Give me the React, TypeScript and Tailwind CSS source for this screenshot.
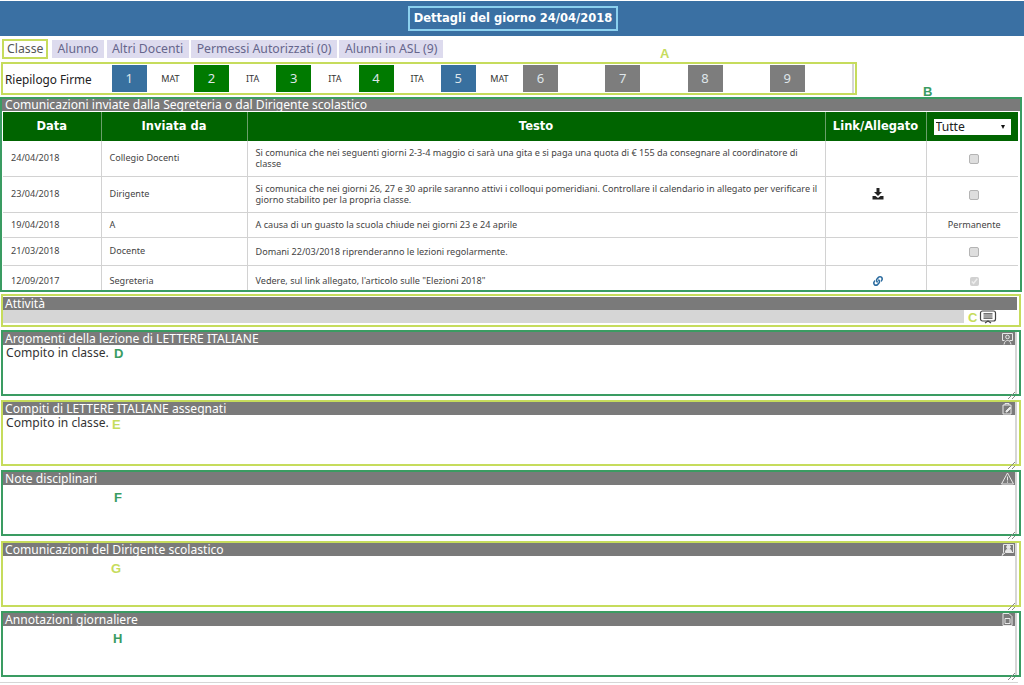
import { FaLink } from "react-icons/fa";
import { ReactNode } from "react";

const BODY = "font-['Noto_Sans','DejaVu_Sans',sans-serif]";
const HEAD = "font-['DejaVu_Sans',sans-serif]";
const LIME = "border-[#c6dc5c]";
const GREEN = "border-[#3a9c62]";

const periods = [
  { n: 1, s: "MAT", c: "bg-[#38709f]" },
  { n: 2, s: "ITA", c: "bg-[#007a00]" },
  { n: 3, s: "ITA", c: "bg-[#007a00]" },
  { n: 4, s: "ITA", c: "bg-[#007a00]" },
  { n: 5, s: "MAT", c: "bg-[#38709f]" },
  { n: 6, s: "", c: "bg-[#7d7d7d]" },
  { n: 7, s: "", c: "bg-[#7d7d7d]" },
  { n: 8, s: "", c: "bg-[#7d7d7d]" },
  { n: 9, s: "", c: "bg-[#7d7d7d]" },
];

const box = "align-middle w-[10px] h-[10px] appearance-none rounded-[2px] border border-[#b4b4b4] bg-[#dedede]";

const rows: { d: string; f: string; t: string; h: string; link?: ReactNode; last: ReactNode }[] = [
  {
    d: "24/04/2018",
    f: "Collegio Docenti",
    t: "Si comunica che nei seguenti giorni 2-3-4 maggio ci sarà una gita e si paga una quota di € 155 da consegnare al coordinatore di classe",
    h: "h-[35px]",
    last: <input type="checkbox" disabled className={box} />,
  },
  {
    d: "23/04/2018",
    f: "Dirigente",
    t: "Si comunica che nei giorni 26, 27 e 30 aprile saranno attivi i colloqui pomeridiani. Controllare il calendario in allegato per verificare il giorno stabilito per la propria classe.",
    h: "h-[36px]",
    link: (
      <svg width="12" height="12" viewBox="0 0 12 12" className="mx-auto block" fill="#222">
        <path d="M4.500 0h3v4H10L6 8 2 4h2.500z" />
        <path d="M0.500 8h3l2.500 2 2.500-2h3v3.500h-11z" />
      </svg>
    ),
    last: <input type="checkbox" disabled className={box} />,
  },
  {
    d: "19/04/2018",
    f: "A",
    t: "A causa di un guasto la scuola chiude nei giorni 23 e 24 aprile",
    h: "h-[25px]",
    last: <span>Permanente</span>,
  },
  {
    d: "21/03/2018",
    f: "Docente",
    t: "Domani 22/03/2018 riprenderanno le lezioni regolarmente.",
    h: "h-[28px]",
    last: <input type="checkbox" disabled className={box} />,
  },
  {
    d: "12/09/2017",
    f: "Segreteria",
    t: "Vedere, sul link allegato, l'articolo sulle \"Elezioni 2018\"",
    h: "h-[31px]",
    link: <FaLink className="mx-auto block text-[#2a6a9e] text-[10px]" />,
    last: <input type="checkbox" disabled defaultChecked className="align-middle w-[9px] h-[9px]" />,
  },
];

function Mark({ c, className }: { c: string; className: string }) {
  return (
    <span className={`absolute font-['Liberation_Sans',sans-serif] font-bold text-[13px] leading-none ${className}`}>{c}</span>
  );
}

function Grip() {
  return (
    <svg width="9" height="9" viewBox="0 0 9 9" className="absolute right-[3px] bottom-[-6px] z-10" stroke="#8a8a8a" fill="none">
      <path d="M1 8 8 1M5 8 8 5" />
    </svg>
  );
}

const iconProps = { width: 13, height: 13, viewBox: "0 0 13 13", fill: "none", stroke: "#e8e8e8", strokeWidth: 1 };

const IconTalk = (
  <svg {...iconProps}>
    <path d="M1.500 1.500h10v7h-3M1.500 1.500v7h2" />
    <circle cx="6.500" cy="5" r="1.800" />
    <path d="M3 12.500c.5-3 2-4 3.500-4s3 1 3.500 4" />
  </svg>
);
const IconClip = (
  <svg {...iconProps}>
    <path d="M2 3h8v9H2zM4 3V1.500h4V3" />
    <path d="M5 9l4-4 1 1-4 4H5z" fill="#e8e8e8" />
  </svg>
);
const IconWarn = (
  <svg {...iconProps}>
    <path d="M6.500 1 12.500 12H.5z" />
    <path d="M6.500 4.500v4M6.500 9.500v1.200" />
  </svg>
);
const IconUser = (
  <svg {...iconProps}>
    <path d="M2.500 1.500h10v8h-8l-3.500 3 1.500-3z" />
    <circle cx="7.500" cy="4" r="1.800" fill="#e8e8e8" />
    <path d="M4.500 9c0-2 1.500-3 3-3s3 1 3 3z" fill="#e8e8e8" />
  </svg>
);
const IconFile = (
  <svg {...iconProps}>
    <path d="M2 .5h6l3 3v9H2z" />
    <path d="M4 5.500h5v5H4z" />
  </svg>
);

function Section({
  title,
  body,
  icon,
  lime,
  mt,
  mark,
}: {
  title: string;
  body?: string;
  icon: ReactNode;
  lime?: boolean;
  mt: string;
  mark: ReactNode;
}) {
  return (
    <section className={`relative ${mt} h-[66px] w-[1020px] ml-px border-2 ${lime ? LIME : GREEN}`}>
      <div className="h-full mr-[2px] border-r-2 border-[#d6d6d6]">
        <h3 className={`${BODY} flex items-center justify-between h-[13px] bg-[#7a7a7a] pl-[2px] pr-[1px] text-[12.100px] leading-[13px] font-normal text-white`}>
          <span>{title}</span>
          {icon}
        </h3>
        {body && <p className={`${BODY} pl-[3px] text-[12.100px] leading-[16px] text-[#333]`}>{body}</p>}
      </div>
      {mark}
      <Grip />
    </section>
  );
}

export default function App() {
  const cell = "border-r border-b border-[#d2d2d2] pl-2 pr-[4px] align-middle";
  const tabs = [
    "Alunno",
    "Altri Docenti",
    "Permessi Autorizzati (0)",
    "Alunni in ASL (9)",
  ];
  return (
    <div className={`${BODY} relative w-[1024px] h-[685px] overflow-hidden bg-white text-[#333]`}>
      <header className="mt-px h-[35px] bg-[#3a70a3] flex items-center justify-center">
        <h1 className={`${HEAD} ml-[2px] h-[25px] px-[3.500px] flex items-center border-2 border-[#8cd0ee] text-[11.500px] font-bold text-white`}>
          Dettagli del giorno 24/04/2018
        </h1>
      </header>

      <nav className="relative mt-[3px] ml-[2px] h-[20px] flex items-center gap-[2.500px] text-[12.250px]">
        <span className={`h-[20px] flex items-center px-[3px] mr-px border-2 ${LIME} text-[#555]`}>Classe</span>
        {tabs.map((t) => (
          <span key={t} className="h-[18px] flex items-center px-[5.500px] bg-[#dddbee] text-[#66668c]">
            {t}
          </span>
        ))}
      </nav>

      <div className={`relative mt-[3px] ml-[1px] w-[856px] h-[33px] border-2 ${LIME}`}>
        <div className="h-full flex items-center border-r-2 border-[#d6d6d6] mr-px">
          <span className="w-[109px] pl-[2px] pt-[2px] text-[11.800px] text-[#222]">Riepilogo Firme</span>
          {periods.map((p) => (
            <div key={p.n} className="flex items-center h-[27px]">
              <span className={`${p.c} w-[35px] h-[27px] pt-px flex items-center justify-center text-[13px] text-[#dfe6ea]`}>{p.n}</span>
              <span className="w-[47.250px] text-center text-[9px] text-[#333]">{p.s}</span>
            </div>
          ))}
        </div>
      </div>

      <section className={`relative mt-[2px] w-[1022px] h-[195px] overflow-hidden border-2 ${GREEN}`}>
        <h2 className="h-[12px] bg-[#7a7a7a] text-[12.100px] leading-[11px] font-normal text-white pl-[3px]">
          Comunicazioni inviate dalla Segreteria o dal Dirigente scolastico
        </h2>
        <table className="mt-px ml-px w-[1015px] table-fixed border-collapse text-[9.100px] text-[#444]">
          <colgroup>
            <col className="w-[98px]" />
            <col className="w-[146px]" />
            <col className="w-[578px]" />
            <col className="w-[101px]" />
            <col className="w-[92px]" />
          </colgroup>
          <thead>
            <tr className={`${HEAD} h-[29px] bg-[#006400] text-white text-[11.500px] font-bold`}>
              <th className="border-r border-[#6a9f6a]">Data</th>
              <th className="border-r border-[#6a9f6a]">Inviata da</th>
              <th className="border-r border-[#6a9f6a]">Testo</th>
              <th className="border-r border-[#6a9f6a] whitespace-nowrap">Link/Allegato</th>
              <th className="px-[7px]">
                <div className="relative">
                  <select className={`${BODY} block w-[77px] h-[16px] appearance-none bg-white pl-[2px] text-[12.200px] leading-[16px] font-normal text-[#222]`} defaultValue="Tutte">
                    <option>Tutte</option>
                  </select>
                  <span className="absolute right-[6px] top-[6px] w-0 h-0 border-x-[2.500px] border-t-[4px] border-x-transparent border-t-[#111]" />
                </div>
              </th>
            </tr>
          </thead>
          <tbody>
            {rows.map((r) => (
              <tr key={r.d} className={r.h}>
                <td className={cell}>{r.d}</td>
                <td className={cell}>{r.f}</td>
                <td className={`${cell} leading-[11px]`}>{r.t}</td>
                <td className={cell}>{r.link}</td>
                <td className={`${cell} pr-2 border-r-0 text-center`}>{r.last}</td>
              </tr>
            ))}
          </tbody>
        </table>
      </section>

      <section className={`relative mt-[2px] ml-px w-[1020px] h-[33px] pt-px border-2 ${LIME}`}>
        <h3 className="mr-[2px] h-[13px] bg-[#7a7a7a] text-[12.100px] leading-[13px] font-normal text-white pl-[2px]">Attività</h3>
        <div className="h-[13px] w-[961px] bg-[#d6d6d6]" />
        <svg width="18" height="16" viewBox="0 0 18 16" fill="none" stroke="#444" strokeWidth="1.200" className="absolute right-[22px] top-[14px]">
          <rect x="1.500" y="1" width="15" height="10" rx="2" />
          <path d="M4.500 3.800h9M4.500 6h9M4.500 8.200h9M6 13l3-2 3 2" />
        </svg>
        <Mark c="C" className="left-[965px] top-[15px] text-[#c6dc5c]" />
      </section>

      <Section mt="mt-[3px]" title="Argomenti della lezione di LETTERE ITALIANE" body="Compito in classe." icon={IconTalk}
        mark={<Mark c="D" className="left-[111px] top-[15px] text-[#3a9c62]" />} />
      <Section lime mt="mt-[4px]" title="Compiti di LETTERE ITALIANE assegnati" body="Compito in classe." icon={IconClip}
        mark={<Mark c="E" className="left-[109px] top-[16px] text-[#c6dc5c]" />} />
      <Section mt="mt-[4px]" title="Note disciplinari" icon={IconWarn}
        mark={<Mark c="F" className="left-[111px] top-[19px] text-[#3a9c62]" />} />
      <Section lime mt="mt-[5px]" title="Comunicazioni del Dirigente scolastico" icon={IconUser}
        mark={<Mark c="G" className="left-[108px] top-[19px] text-[#c6dc5c]" />} />
      <Section mt="mt-[4px]" title="Annotazioni giornaliere" icon={IconFile}
        mark={<Mark c="H" className="left-[110px] top-[19px] text-[#3a9c62]" />} />

      <div className="mt-[5px] h-px w-[1018px] bg-[#d6d6d6]" />

      <Mark c="A" className="left-[660px] top-[47px] text-[#c6dc5c]" />
      <Mark c="B" className="left-[923px] top-[85px] text-[#3a9c62]" />
    </div>
  );
}
